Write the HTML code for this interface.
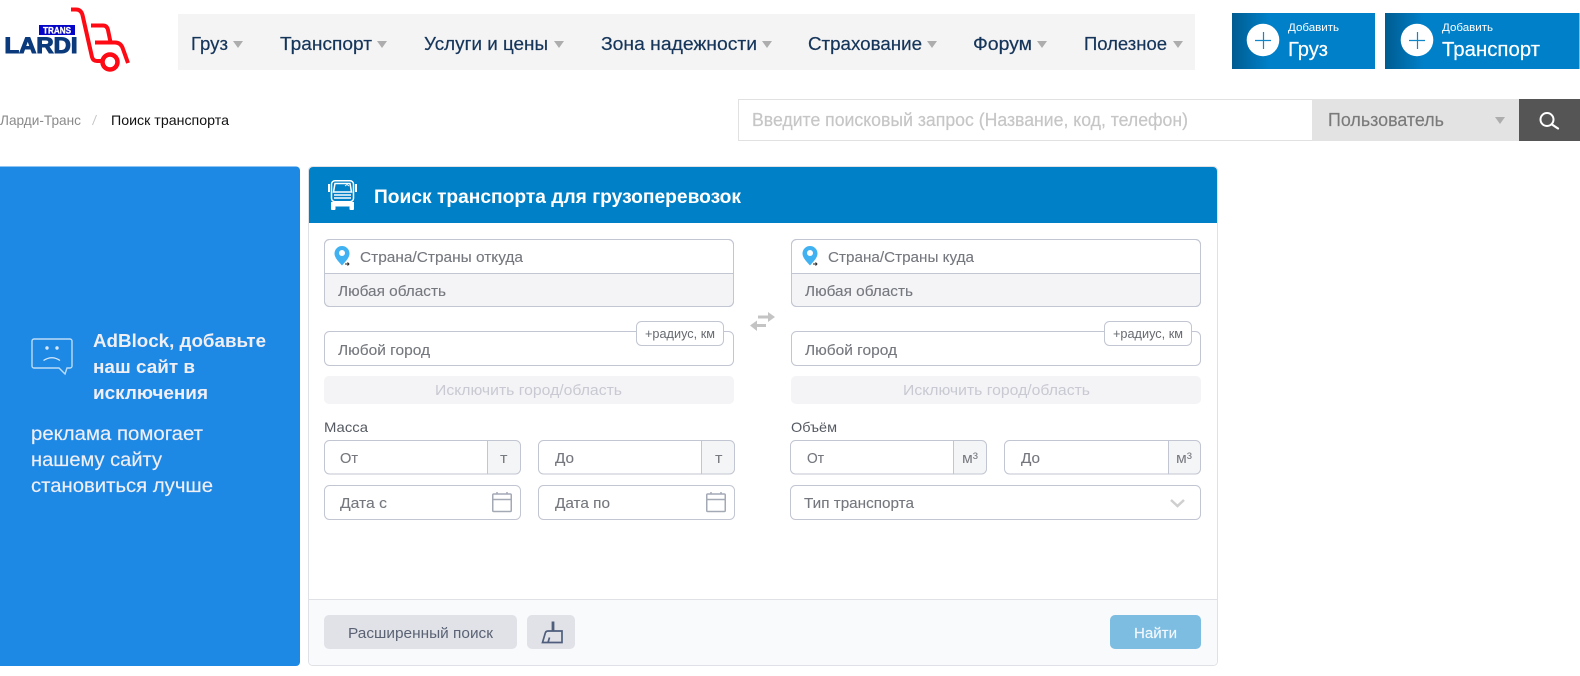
<!DOCTYPE html>
<html lang="ru">
<head>
<meta charset="utf-8">
<title>Поиск транспорта</title>
<style>
html,body{margin:0;padding:0;background:#fff;width:1580px;height:676px;overflow:hidden}
svg{display:block}
text{font-family:"Liberation Sans","DejaVu Sans",sans-serif;white-space:pre}
.nav{font-size:18px;fill:#15355a;stroke:#15355a;stroke-width:.2}
.f{font-size:15px;fill:#74777d;stroke:#74777d;stroke-width:.12}
.b{font-weight:bold}
</style>
</head>
<body>
<svg width="1580" height="676" viewBox="0 0 1580 676" xmlns="http://www.w3.org/2000/svg">
<defs>
<linearGradient id="g1" x1="0" x2="1" y1="0" y2="0"><stop offset="0" stop-color="#005c90"/><stop offset=".26" stop-color="#0080c9"/></linearGradient>
<linearGradient id="g2" x1="0" x2="1" y1="0" y2="0"><stop offset="0" stop-color="#005c90"/><stop offset=".2" stop-color="#0080c9"/></linearGradient>
</defs>
<rect width="1580" height="676" fill="#fff"/>

<!-- logo -->
<rect x="39" y="25" width="36" height="10" fill="#0606c8"/>
<text x="43" y="33.500" font-size="9" class="b" fill="#fff" stroke="#fff" stroke-width=".3" textLength="28" lengthAdjust="spacingAndGlyphs">TRANS</text>
<text x="4.500" y="53" font-size="22" class="b" fill="#0b3a7c" stroke="#0b3a7c" stroke-width="1.100" textLength="73" lengthAdjust="spacingAndGlyphs">LARDI</text>
<g fill="none" stroke="#fd0a14" stroke-width="4">
<path d="M71 9.500H76Q81 9.500 82.500 15L92 57Q93 61 97 61H101"/>
<path d="M91 25.500H103Q107 25.500 108 30L110.500 42"/>
<path d="M95 42.500H115Q121 42.500 123 49L128 63"/>
<circle cx="110" cy="62" r="7.500" stroke-width="4.500"/>
</g>

<!-- nav -->
<rect x="178" y="14" width="1017" height="56" fill="#f4f4f4"/>
<g class="nav">
<text x="191" y="50" textLength="37" lengthAdjust="spacingAndGlyphs">Груз</text>
<text x="280" y="50" textLength="92" lengthAdjust="spacingAndGlyphs">Транспорт</text>
<text x="424" y="50" textLength="124" lengthAdjust="spacingAndGlyphs">Услуги и цены</text>
<text x="601" y="50" textLength="156" lengthAdjust="spacingAndGlyphs">Зона надежности</text>
<text x="808" y="50" textLength="114" lengthAdjust="spacingAndGlyphs">Страхование</text>
<text x="973" y="50" textLength="59" lengthAdjust="spacingAndGlyphs">Форум</text>
<text x="1084" y="50" textLength="83" lengthAdjust="spacingAndGlyphs">Полезное</text>
</g>
<g fill="#adadad">
<path d="M233 41H243L238 48Z"/><path d="M377 41H387L382 48Z"/><path d="M554 41H564L559 48Z"/><path d="M762 41H772L767 48Z"/><path d="M927 41H937L932 48Z"/><path d="M1037 41H1047L1042 48Z"/><path d="M1173 41H1183L1178 48Z"/>
</g>

<!-- add buttons -->
<rect x="1232" y="13" width="143" height="56" fill="url(#g1)"/>
<rect x="1385" y="13" width="194.500" height="56" fill="url(#g2)"/>
<circle cx="1263" cy="40" r="16.300" fill="#fff"/>
<circle cx="1417" cy="40" r="16.300" fill="#fff"/>
<path d="M1255 40.500H1271M1263.500 32V49M1409 40.500H1425M1417.500 32V49" stroke="#1287c8" stroke-width="1.200"/>
<g fill="#fff">
<text x="1288" y="31" font-size="11" textLength="51" lengthAdjust="spacingAndGlyphs">Добавить</text>
<text x="1288" y="56" font-size="20" stroke="#fff" stroke-width=".2" textLength="40" lengthAdjust="spacingAndGlyphs">Груз</text>
<text x="1442" y="31" font-size="11" textLength="51" lengthAdjust="spacingAndGlyphs">Добавить</text>
<text x="1442" y="56" font-size="20" stroke="#fff" stroke-width=".2" textLength="98" lengthAdjust="spacingAndGlyphs">Транспорт</text>
</g>

<!-- breadcrumb -->
<text x="0" y="125" font-size="14" fill="#8a8a8a" textLength="81" lengthAdjust="spacingAndGlyphs">Ларди-Транс</text>
<path d="M96.500 115L92.500 125" stroke="#c4c4c4" stroke-width="1"/>
<text x="111" y="125" font-size="14" fill="#111" textLength="118" lengthAdjust="spacingAndGlyphs">Поиск транспорта</text>

<!-- search -->
<rect x="738.500" y="99.500" width="574" height="41" fill="#fff" stroke="#e1e1e1"/>
<text x="752" y="126" font-size="18" fill="#c6c6c6" stroke="#c6c6c6" stroke-width=".2" textLength="436" lengthAdjust="spacingAndGlyphs">Введите поисковый запрос (Название, код, телефон)</text>
<rect x="1312" y="99" width="207" height="42" fill="#e3e3e3"/>
<text x="1328" y="126" font-size="18" fill="#7a7a7a" stroke="#7a7a7a" stroke-width=".15" textLength="116" lengthAdjust="spacingAndGlyphs">Пользователь</text>
<path d="M1495 117H1505L1500 124Z" fill="#adadad"/>
<rect x="1519" y="99" width="61" height="42" fill="#555"/>
<circle cx="1547" cy="119.500" r="6.500" fill="none" stroke="#fff" stroke-width="2"/>
<path d="M1552 124.500L1558 128.500" stroke="#fff" stroke-width="2.200" stroke-linecap="round"/>

<!-- adblock panel -->
<path d="M0 166.500H296a4 4 0 0 1 4 4V662a4 4 0 0 1-4 4H0Z" fill="#1e88e5"/>
<path d="M34 339H70a2 2 0 0 1 2 2V366a2 2 0 0 1-2 2H67L65 374L59 368H34a2 2 0 0 1-2-2V341a2 2 0 0 1 2-2Z" fill="none" stroke="#bcdcf6" stroke-width="1.400"/>
<circle cx="47" cy="348" r="1.700" fill="#d8eafa"/><circle cx="57" cy="348" r="1.700" fill="#d8eafa"/>
<path d="M43.500 360.500Q52 355 60 360.500" fill="none" stroke="#d8eafa" stroke-width="1.300"/>
<g fill="#f0eff5">
<text x="93" y="347" font-size="18" class="b" textLength="173" lengthAdjust="spacingAndGlyphs">AdBlock, добавьте</text>
<text x="93" y="373" font-size="18" class="b" textLength="102" lengthAdjust="spacingAndGlyphs">наш сайт в</text>
<text x="93" y="399" font-size="18" class="b" textLength="115" lengthAdjust="spacingAndGlyphs">исключения</text>
<text x="31" y="440" font-size="19.500" stroke="#f0eff5" stroke-width=".15" textLength="172" lengthAdjust="spacingAndGlyphs">реклама помогает</text>
<text x="31" y="466" font-size="19.500" stroke="#f0eff5" stroke-width=".15" textLength="131" lengthAdjust="spacingAndGlyphs">нашему сайту</text>
<text x="31" y="492" font-size="19.500" stroke="#f0eff5" stroke-width=".15" textLength="182" lengthAdjust="spacingAndGlyphs">становиться лучше</text>
</g>

<!-- main card -->
<rect x="308.500" y="166.500" width="909" height="499" rx="4" fill="#fff" stroke="#e0e1e7"/>
<path d="M309 665V599.500H1217V661a4 4 0 0 1-4 4H313a4 4 0 0 1-4-4Z" fill="#f9fafc"/>
<path d="M309 599.500H1217" stroke="#e0e1e7"/>
<path d="M313 167H1213a4 4 0 0 1 4 4V223H309V171a4 4 0 0 1 4-4Z" fill="#0080c6"/>
<text x="374" y="203" font-size="19" class="b" fill="#fff" textLength="367" lengthAdjust="spacingAndGlyphs">Поиск транспорта для грузоперевозок</text>
<!-- truck -->
<g fill="none" stroke="#fff" stroke-width="1.500">
<rect x="331.500" y="180.700" width="22" height="21" rx="3.500"/>
<path d="M333.500 192L335 183.500H350L351.500 192Z"/>
<path d="M329 184V192M356 184V192" stroke-width="2"/>
<path d="M334 195H351M334 198H351"/>
<path d="M345 186l2-1.500 2 1.500" stroke-width=".8"/>
</g>
<rect x="331" y="202" width="23" height="4.500" fill="#fff"/>
<rect x="331" y="206" width="4.500" height="4" rx="1" fill="#fff"/><rect x="349.500" y="206" width="4.500" height="4" rx="1" fill="#fff"/>

<!-- from group -->
<rect x="324.500" y="239.500" width="409" height="67" rx="5" fill="#fff" stroke="#c2c6d2"/>
<path d="M325 273.500H733V301a5 5 0 0 1-5 5H330a5 5 0 0 1-5-5Z" fill="#f4f4f6"/>
<path d="M325 273.500H733" stroke="#c2c6d2"/>
<rect x="324.500" y="239.500" width="409" height="67" rx="5" fill="none" stroke="#c2c6d2"/>
<path d="M342 246a7.500 7.500 0 0 1 7.500 7.500C349.500 258 345 262 342 265.500C339 262 334.500 258 334.500 253.500A7.500 7.500 0 0 1 342 246Z" fill="#40b1f1"/><circle cx="342" cy="253" r="3" fill="#fff"/>
<path d="M345 264H349M347.500 262.500L349 264L347.500 265.500" fill="none" stroke="#222" stroke-width=".9"/>
<text x="360" y="262" class="f" textLength="163" lengthAdjust="spacingAndGlyphs">Страна/Страны откуда</text>
<text x="338" y="296" class="f" textLength="108" lengthAdjust="spacingAndGlyphs">Любая область</text>

<!-- to group -->
<rect x="791.500" y="239.500" width="409" height="67" rx="5" fill="#fff" stroke="#c2c6d2"/>
<path d="M792 273.500H1200V301a5 5 0 0 1-5 5H797a5 5 0 0 1-5-5Z" fill="#f4f4f6"/>
<path d="M792 273.500H1200" stroke="#c2c6d2"/>
<rect x="791.500" y="239.500" width="409" height="67" rx="5" fill="none" stroke="#c2c6d2"/>
<path d="M810 246a7.500 7.500 0 0 1 7.500 7.500C817.500 258 813 262 810 265.500C807 262 802.500 258 802.500 253.500A7.500 7.500 0 0 1 810 246Z" fill="#40b1f1"/><circle cx="810" cy="253" r="3" fill="#fff"/>
<path d="M813 264H817M815.500 262.500L817 264L815.500 265.500" fill="none" stroke="#222" stroke-width=".9"/>
<text x="828" y="262" class="f" textLength="146" lengthAdjust="spacingAndGlyphs">Страна/Страны куда</text>
<text x="805" y="296" class="f" textLength="108" lengthAdjust="spacingAndGlyphs">Любая область</text>

<!-- swap -->
<path d="M775 317L768 312V315.500H758V318.500H768V322Z" fill="#c4c4c4"/>
<path d="M750 325.500L757 320.500V324H766V327H757V331Z" fill="#c4c4c4"/>

<!-- city -->
<rect x="324.500" y="331.500" width="409" height="34" rx="5" fill="#fff" stroke="#c2c6d2"/>
<text x="338" y="355" class="f" textLength="92" lengthAdjust="spacingAndGlyphs">Любой город</text>
<rect x="636.500" y="321.500" width="87" height="24" rx="5" fill="#fff" stroke="#c2c6d2"/>
<text x="645" y="338" font-size="13" fill="#666a70" textLength="70" lengthAdjust="spacingAndGlyphs">+радиус, км</text>
<rect x="791.500" y="331.500" width="409" height="34" rx="5" fill="#fff" stroke="#c2c6d2"/>
<text x="805" y="355" class="f" textLength="92" lengthAdjust="spacingAndGlyphs">Любой город</text>
<rect x="1104.500" y="321.500" width="87" height="24" rx="5" fill="#fff" stroke="#c2c6d2"/>
<text x="1113" y="338" font-size="13" fill="#666a70" textLength="70" lengthAdjust="spacingAndGlyphs">+радиус, км</text>

<!-- exclude -->
<rect x="324" y="376" width="410" height="28" rx="5" fill="#f4f4f6"/>
<text x="435" y="395" font-size="15" fill="#c8c9d2" textLength="187" lengthAdjust="spacingAndGlyphs">Исключить город/область</text>
<rect x="791" y="376" width="410" height="28" rx="5" fill="#f4f4f6"/>
<text x="903" y="395" font-size="15" fill="#c8c9d2" textLength="187" lengthAdjust="spacingAndGlyphs">Исключить город/область</text>

<!-- labels -->
<text x="324" y="432" font-size="14" fill="#555a62" textLength="44" lengthAdjust="spacingAndGlyphs">Масса</text>
<text x="791" y="432" font-size="14" fill="#555a62" textLength="46" lengthAdjust="spacingAndGlyphs">Объём</text>

<!-- mass -->
<path d="M487.500 440.500H516a5 5 0 0 1 5 5V469a5 5 0 0 1-5 5H487.500Z" fill="#f4f5f7"/>
<rect x="324.500" y="440.500" width="196" height="33.500" rx="5" fill="none" stroke="#c2c6d2"/>
<path d="M487.500 440.500V474" stroke="#c2c6d2"/>
<text x="340" y="463" class="f" textLength="18" lengthAdjust="spacingAndGlyphs">От</text>
<text x="500" y="463" font-size="15" fill="#777a80" textLength="7.500" lengthAdjust="spacingAndGlyphs">т</text>
<path d="M701.500 440.500H730a5 5 0 0 1 5 5V469a5 5 0 0 1-5 5H701.500Z" fill="#f4f5f7"/>
<rect x="538.500" y="440.500" width="196" height="33.500" rx="5" fill="none" stroke="#c2c6d2"/>
<path d="M701.500 440.500V474" stroke="#c2c6d2"/>
<text x="555" y="463" class="f" textLength="19" lengthAdjust="spacingAndGlyphs">До</text>
<text x="715" y="463" font-size="15" fill="#777a80" textLength="7.500" lengthAdjust="spacingAndGlyphs">т</text>

<!-- volume -->
<path d="M953.500 440.500H982a5 5 0 0 1 5 5V469a5 5 0 0 1-5 5H953.500Z" fill="#f4f5f7"/>
<rect x="790.500" y="440.500" width="196" height="33.500" rx="5" fill="none" stroke="#c2c6d2"/>
<path d="M953.500 440.500V474" stroke="#c2c6d2"/>
<text x="807" y="463" class="f" textLength="17" lengthAdjust="spacingAndGlyphs">От</text>
<text x="962" y="463" font-size="15" fill="#777a80" textLength="16" lengthAdjust="spacingAndGlyphs">м³</text>
<path d="M1168.500 440.500H1196a5 5 0 0 1 5 5V469a5 5 0 0 1-5 5H1168.500Z" fill="#f4f5f7"/>
<rect x="1004.500" y="440.500" width="196" height="33.500" rx="5" fill="none" stroke="#c2c6d2"/>
<path d="M1168.500 440.500V474" stroke="#c2c6d2"/>
<text x="1021" y="463" class="f" textLength="19" lengthAdjust="spacingAndGlyphs">До</text>
<text x="1176" y="463" font-size="15" fill="#777a80" textLength="16" lengthAdjust="spacingAndGlyphs">м³</text>

<!-- dates -->
<rect x="324.500" y="485.500" width="196" height="34" rx="5" fill="#fff" stroke="#c2c6d2"/>
<text x="340" y="508" class="f" textLength="47" lengthAdjust="spacingAndGlyphs">Дата с</text>
<g fill="none" stroke="#a4a9b6" stroke-width="1.500">
<rect x="492.750" y="494" width="18.500" height="17.500" rx="1"/><path d="M493 499.500H511M497 492V494.500M507 492V494.500"/>
</g>
<rect x="538.500" y="485.500" width="196" height="34" rx="5" fill="#fff" stroke="#c2c6d2"/>
<text x="555" y="508" class="f" textLength="55" lengthAdjust="spacingAndGlyphs">Дата по</text>
<g fill="none" stroke="#a4a9b6" stroke-width="1.500">
<rect x="706.750" y="494" width="18.500" height="17.500" rx="1"/><path d="M707 499.500H725M711 492V494.500M721 492V494.500"/>
</g>

<!-- type -->
<rect x="790.500" y="485.500" width="410" height="34" rx="5" fill="#fff" stroke="#c2c6d2"/>
<text x="804" y="508" class="f" textLength="110" lengthAdjust="spacingAndGlyphs">Тип транспорта</text>
<path d="M1171 500L1177.500 506L1184 500" fill="none" stroke="#cfcfcf" stroke-width="2.500"/>

<!-- footer buttons -->
<rect x="324" y="615" width="193" height="34" rx="5" fill="#e0e2e8"/>
<text x="348" y="638" font-size="15" fill="#5a6274" textLength="145" lengthAdjust="spacingAndGlyphs">Расширенный поиск</text>
<rect x="527" y="615" width="48" height="34" rx="5" fill="#e0e2e8"/>
<g fill="none" stroke="#4f5e7c" stroke-width="1.700">
<path d="M553 621.500V631" stroke-width="2.800"/>
<path d="M548 631H562V642.500H542.500L545 634Q545.500 631 548 631Z"/>
<path d="M549.500 637.500L548 642.500"/>
</g>
<rect x="1110" y="615" width="91" height="34" rx="5" fill="#7dbde2"/>
<text x="1134" y="638" font-size="15" fill="#f2f7fb" stroke="#f2f7fb" stroke-width=".15" textLength="43" lengthAdjust="spacingAndGlyphs">Найти</text>
</svg>
</body>
</html>
